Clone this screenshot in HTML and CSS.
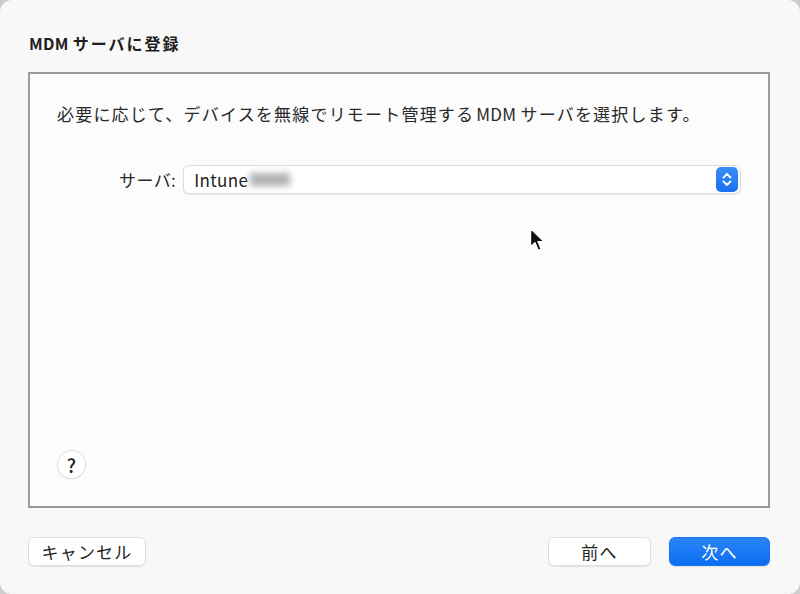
FILE: index.html
```html
<!DOCTYPE html>
<html lang="ja">
<head>
<meta charset="utf-8">
<link rel="stylesheet" href="styles.css">
</head>
<body>
<div class="window">
  <div class="title"><span class="latin">MDM</span>サーバに登録</div>
  <div class="box">
    <p class="desc">必要に応じて、デバイスを無線でリモート管理する<span class="latin mid">MDM</span>サーバを選択します。</p>
    <div class="row">
      <span class="label">サーバ:</span>
      <div class="select">
        <span class="value">Intune</span><span class="blur"></span>
        <span class="stepper">
          <svg width="22" height="25" viewBox="0 0 22 25"><path d="M7.5 10.5 L11 7 L14.5 10.5 M7.5 14.5 L11 18 L14.5 14.5" fill="none" stroke="#fff" stroke-width="1.8" stroke-linecap="round" stroke-linejoin="round"/></svg>
        </span>
      </div>
    </div>
    <div class="help">?</div>
  </div>
  <div class="footer">
    <button class="btn cancel">キャンセル</button>
    <div class="spacer"></div>
    <button class="btn prev">前へ</button>
    <button class="btn next">次へ</button>
  </div>
  <svg class="cursor" width="20" height="28" viewBox="0 0 20 28"><path d="M1.5 1.5 L1.5 20 L6 15.8 L9.2 23.5 L12.2 22.2 L9 14.6 L15 14.6 Z" fill="#111" stroke="#fff" stroke-width="1.4" stroke-linejoin="round"/></svg>
</div>
</body>
</html>
```
FILE: styles.css
```css
html, body { margin: 0; padding: 0; }
body {
  background: #cdcdcd;
  width: 800px;
  height: 594px;
  overflow: hidden;
  font-family: "Noto Sans CJK JP", "Noto Sans", sans-serif;
  color: #222;
}
.window {
  position: relative;
  width: 800px;
  height: 594px;
  box-sizing: border-box;
  background: #f8f8f8;
  border-radius: 12px;
  padding: 0 30px 0 28px;
  display: flex;
  flex-direction: column;
}
.title {
  padding-top: 32px;
  margin-bottom: 18px;
  height: 22px;
  line-height: 22px;
  font-size: 16px;
  font-weight: 700;
  letter-spacing: 2px;
  color: #1e1e1e;
  padding-left: 1px;
}
.latin { margin-right: 4px; letter-spacing: 0.3px; }
.mid { margin-left: 2px; }
.box {
  height: 436px;
  box-sizing: border-box;
  border: 2px solid #9a9a9a;
  background: #fcfcfc;
  padding: 0 27px 28px 27px;
  display: flex;
  flex-direction: column;
}
.desc {
  margin: 28px 0 0 0;
  font-size: 17px;
  line-height: 24px;
  letter-spacing: 1.2px;
  color: #2a2a2a;
  white-space: nowrap;
}
.row {
  display: flex;
  align-items: center;
  margin-top: 39px;
  margin-left: 62px;
  gap: 7px;
}
.label {
  font-size: 17px;
  letter-spacing: 0.4px;
  color: #2a2a2a;
}
.select {
  flex: 1;
  height: 29px;
  box-sizing: border-box;
  background: #fff;
  border: 1px solid #dcdcdc;
  border-radius: 6px;
  box-shadow: 0 1px 1px rgba(0,0,0,0.08);
  display: flex;
  align-items: center;
  padding: 0 2px 0 10px;
}
.value {
  font-size: 17px;
  letter-spacing: 0.4px;
  color: #222;
}
.blur {
  display: inline-block;
  width: 40px;
  height: 13px;
  margin-left: 2px;
  background: #b3b3b3;
  filter: blur(3px);
}
.stepper {
  margin-left: auto;
  width: 22px;
  height: 25px;
  border-radius: 5px;
  background: linear-gradient(#3a8cf8, #1871f2);
  display: flex;
}
.help {
  margin-top: auto;
  margin-left: 1px;
  width: 27px;
  height: 27px;
  border-radius: 50%;
  background: #fff;
  box-shadow: 0 0 0 1px #e0e0e0, 0 1px 2px rgba(0,0,0,0.15);
  text-align: center;
  line-height: 27px;
  font-size: 19px;
  font-weight: 500;
  color: #222;
}
.footer {
  display: flex;
  margin-top: 29px;
  gap: 18px;
}
.spacer { flex: 1; }
.btn {
  height: 29px;
  box-sizing: border-box;
  border-radius: 6px;
  font-family: inherit;
  font-size: 17px;
  letter-spacing: 1.2px;
  line-height: 27px;
  padding: 0;
  border: 1px solid #dedede;
  background: #fff;
  color: #222;
  box-shadow: 0 1px 1px rgba(0,0,0,0.08);
}
.cancel { width: 118px; }
.prev { width: 103px; }
.next {
  width: 101px;
  background: linear-gradient(#2a85f8, #0b6ef1);
  border-color: #1a74ee;
  color: #fff;
}
.cursor {
  position: absolute;
  left: 529px;
  top: 227px;
}
```
